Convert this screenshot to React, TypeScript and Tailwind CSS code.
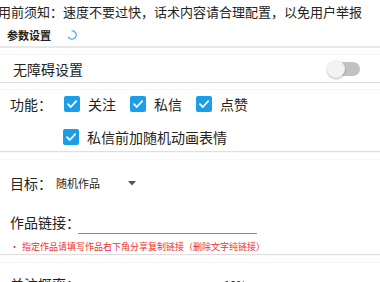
import React from "react";

function Check({ className = "" }: { className?: string }) {
  return (
    <span className={"flex h-[16px] w-[16px] shrink-0 items-center justify-center rounded-[2px] bg-[#1c9de8] " + className}>
      <svg width="12" height="12" viewBox="0 0 12 12" fill="none">
        <path d="M2 6.2 L4.8 9 L10.2 3.2" stroke="white" strokeWidth="1.8" strokeLinecap="round" strokeLinejoin="round" />
      </svg>
    </span>
  );
}

function CheckItem({ label }: { label: string }) {
  return (
    <div className="flex w-[66px] shrink-0 items-center gap-[8px]">
      <Check />
      <span className="whitespace-nowrap text-[14px] leading-[18px]">{label}</span>
    </div>
  );
}

const card = "bg-white shadow-[0_1px_1px_rgba(0,0,0,0.13),0_-1px_0_rgba(0,0,0,0.03)]";

export default function App() {
  return (
    <div className="h-[282px] w-[380px] overflow-hidden bg-white font-['Noto_Sans_CJK_SC',sans-serif] text-[#222]">
      <div className="h-[48px] border-b-2 border-[#e8e8e8] bg-white">
        <div className="ml-[-15px] flex h-[24px] items-center whitespace-nowrap text-[13px] leading-[24px]">
          使用前须知：速度不要过快，话术内容请合理配置，以免用户举报
        </div>
        <div className="flex h-[22px] items-center pl-[7px]">
          <span className="whitespace-nowrap text-[11px] font-bold leading-[22px] text-[#222]">参数设置</span>
          <svg className="ml-[16px]" width="10" height="10" viewBox="0 0 10 10" fill="none">
            <path d="M5 0.8 A4.2 4.2 0 1 1 1.4 7.2" stroke="#2aa5e6" strokeWidth="1.1" strokeLinecap="round" />
          </svg>
        </div>
      </div>

      <div className={card + " mt-[7px] flex h-[27px] items-center justify-between pl-[13px] pr-[20px]"}>
        <span className="whitespace-nowrap text-[14px] leading-[18px]">无障碍设置</span>
        <div className="relative h-[18px] w-[33px]">
          <div className="absolute right-0 top-[2px] h-[14px] w-[25px] rounded-full bg-[#c2c2c2]" />
          <div className="absolute left-0 top-0 h-[18px] w-[18px] rounded-full bg-[#f3f3f3] shadow-[0_1px_2px_rgba(0,0,0,0.3)]" />
        </div>
      </div>

      <div className={card + " mt-[8px] flex h-[61px] flex-col gap-[15px] pl-[10px] pt-[5px]"}>
        <div className="flex h-[18px] items-center">
          <span className="w-[54px] shrink-0 whitespace-nowrap text-[14px] leading-[18px]">功能：</span>
          <CheckItem label="关注" />
          <CheckItem label="私信" />
          <CheckItem label="点赞" />
        </div>
        <div className="flex h-[18px] items-center pl-[53px]">
          <Check />
          <span className="ml-[8px] whitespace-nowrap text-[14px] leading-[18px]">私信前加随机动画表情</span>
        </div>
      </div>

      <div className={card + " mt-[9px] flex h-[94px] flex-col pl-[10px] pt-[14px]"}>
        <div className="flex h-[18px] items-center">
          <span className="w-[46px] shrink-0 whitespace-nowrap text-[14px] leading-[18px]">目标：</span>
          <span className="w-[72px] shrink-0 whitespace-nowrap text-[11px] leading-[18px] text-[#222]">随机作品</span>
          <svg width="8" height="5" viewBox="0 0 8 5">
            <path d="M0 0 L8 0 L4 4.5 Z" fill="#555" />
          </svg>
        </div>
        <div className="mt-[18px] flex h-[24px] items-center">
          <span className="w-[68px] shrink-0 whitespace-nowrap text-[14px] leading-[18px]">作品链接：</span>
          <div className="h-[24px] w-[179px] shrink-0 border-b border-[#8a8a8a]" />
        </div>
        <div className="mt-[7px] whitespace-nowrap text-[9px] leading-[12px] text-[#f0302a]">
          <span className="mr-[3px]">•</span>指定作品请填写作品右下角分享复制链接（删除文字纯链接）
        </div>
      </div>

      <div className={card + " mt-[9px] flex h-[40px] items-start pl-[10px] pt-[12px]"}>
        <span className="w-[214px] shrink-0 whitespace-nowrap text-[14px] leading-[18px]">关注概率：</span>
        <span className="whitespace-nowrap pt-[2px] text-[11px] leading-[14px]">10%</span>
      </div>
    </div>
  );
}
